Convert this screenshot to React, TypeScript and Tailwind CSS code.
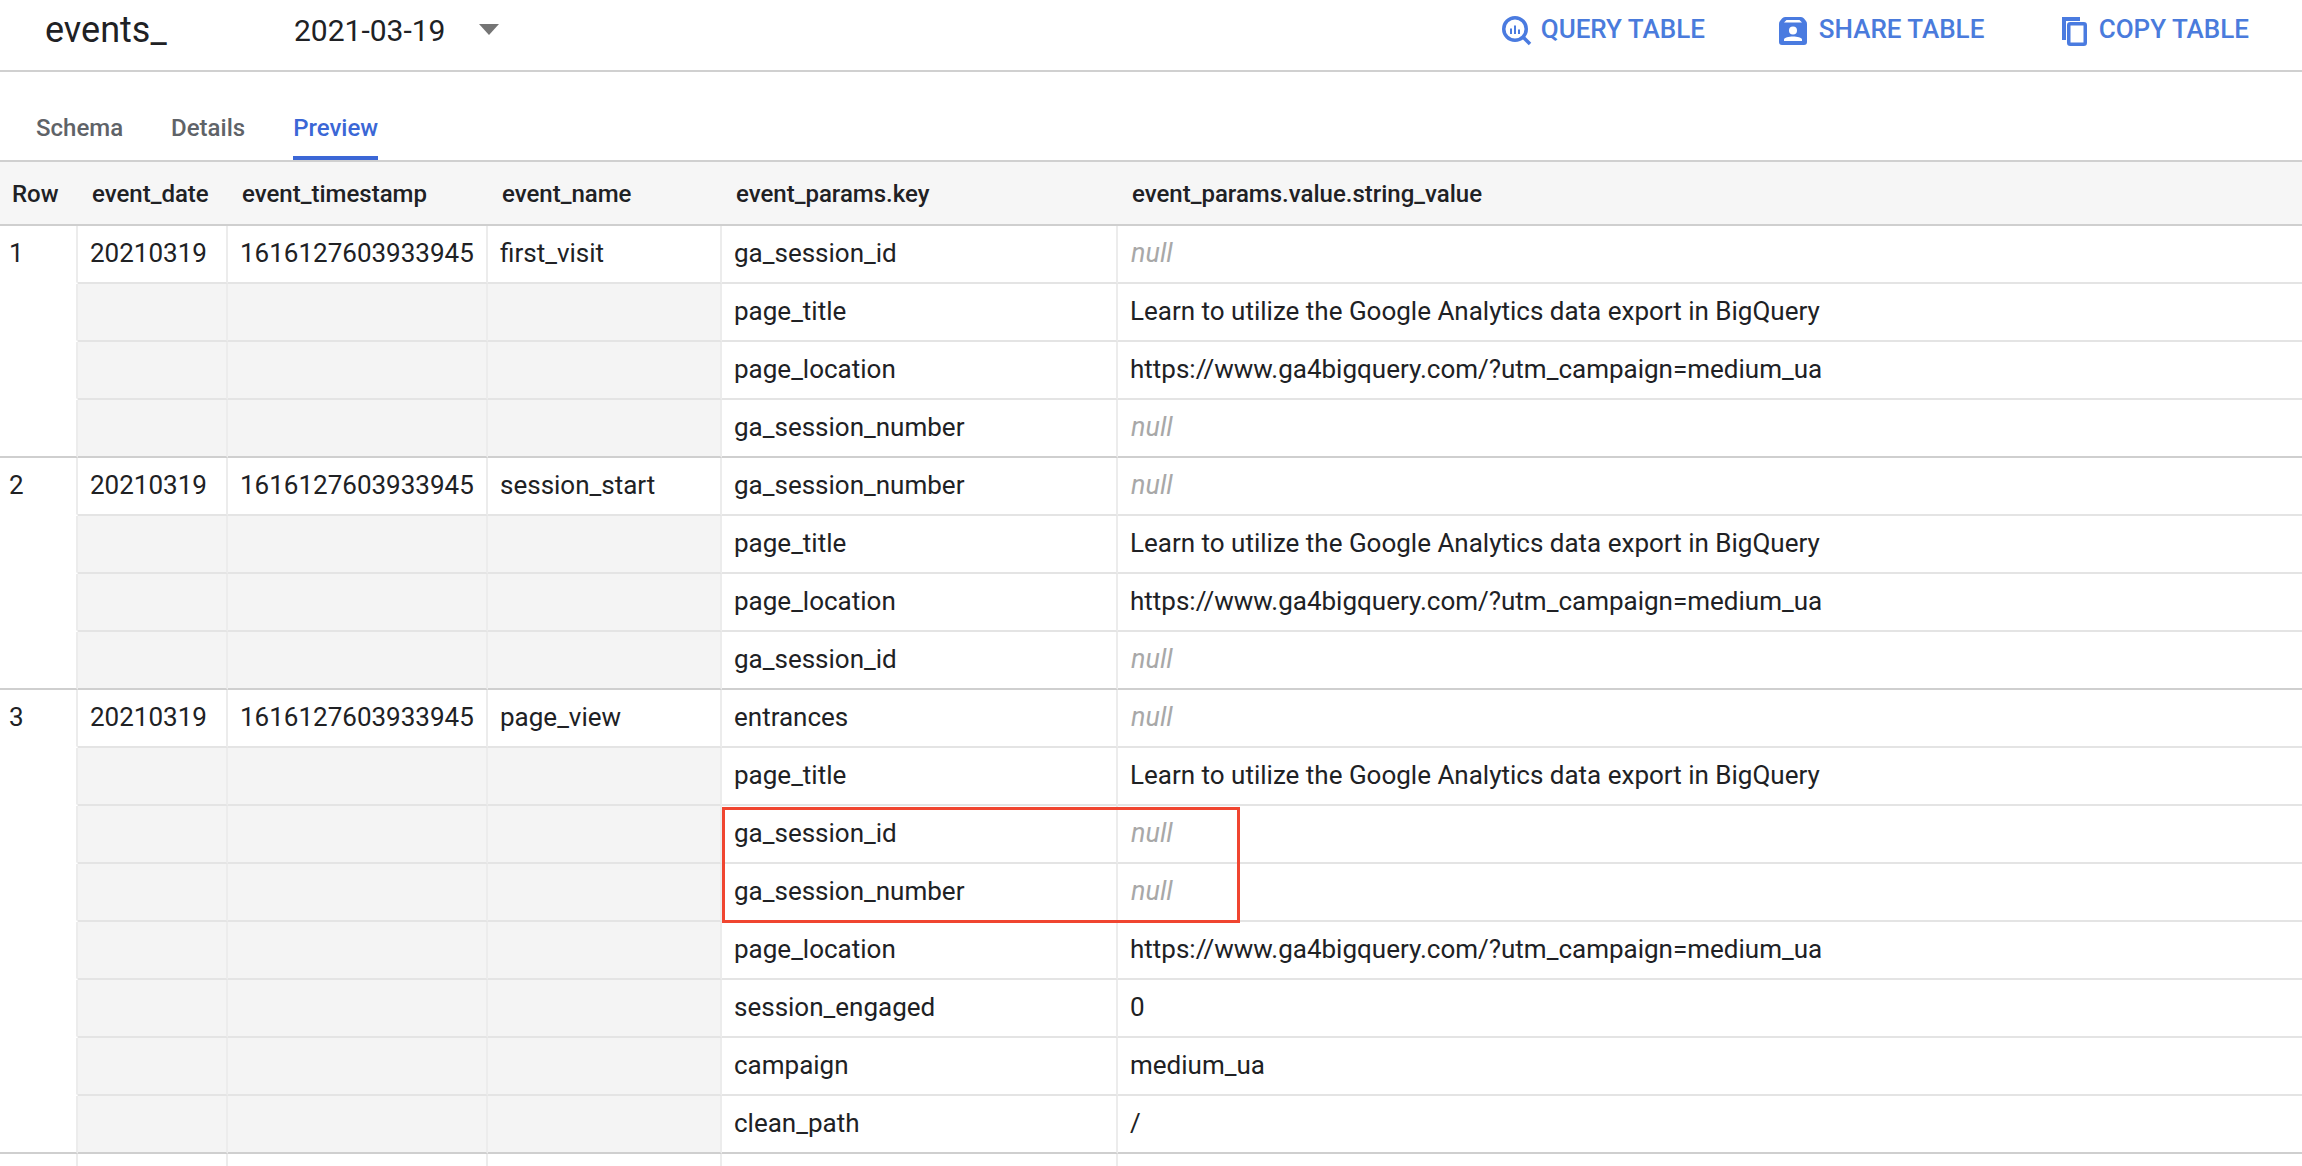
const rows: [string, string][][] = [
  [
    ["ga_session_id", "null"],
    ["page_title", "Learn to utilize the Google Analytics data export in BigQuery"],
    ["page_location", "https://www.ga4bigquery.com/?utm_campaign=medium_ua"],
    ["ga_session_number", "null"],
  ],
  [
    ["ga_session_number", "null"],
    ["page_title", "Learn to utilize the Google Analytics data export in BigQuery"],
    ["page_location", "https://www.ga4bigquery.com/?utm_campaign=medium_ua"],
    ["ga_session_id", "null"],
  ],
  [
    ["entrances", "null"],
    ["page_title", "Learn to utilize the Google Analytics data export in BigQuery"],
    ["ga_session_id", "null"],
    ["ga_session_number", "null"],
    ["page_location", "https://www.ga4bigquery.com/?utm_campaign=medium_ua"],
    ["session_engaged", "0"],
    ["campaign", "medium_ua"],
    ["clean_path", "/"],
  ],
];
const names = ["first_visit", "session_start", "page_view"];

function QueryIcon() {
  return (
    <svg width="30" height="30" viewBox="0 0 30 30" className="shrink-0">
      <circle cx="13" cy="13" r="11.25" fill="none" stroke="#4a7be0" strokeWidth="3.5" />
      <path d="M21.5 21.5l6.5 6.5" stroke="#4a7be0" strokeWidth="3.5" fill="none" />
      <path d="M9 12.5v5.5M13 9.5v8.5M17 13.5v4.5" stroke="#4a7be0" strokeWidth="2" fill="none" />
    </svg>
  );
}
function ShareIcon() {
  return (
    <svg width="28" height="28" viewBox="0 0 28 28" className="shrink-0">
      <path d="M6 0h16q2 0 3 1.5l2 2.5q1 1 1 3v18a3 3 0 0 1-3 3H3a3 3 0 0 1-3-3V7q0-2 1-3l2-2.5Q4 0 6 0z" fill="#4a7be0" />
      <path d="M5 5.5L7.5 3h13L23 5.5z" fill="#fff" />
      <circle cx="14" cy="13.5" r="4" fill="#fff" />
      <path d="M5 24v-1.5c0-2 5-3 9-3s9 1 9 3V24z" fill="#fff" />
    </svg>
  );
}
function CopyIcon() {
  return (
    <svg width="26" height="30" viewBox="0 0 26 30" className="shrink-0">
      <path d="M1 1h18v4H5v19H1z" fill="#4a7be0" />
      <rect x="7.75" y="7.75" width="16.5" height="20.5" rx="1.5" fill="none" stroke="#4a7be0" strokeWidth="3.5" />
    </svg>
  );
}

function Action({ icon, label, className }: { icon: React.ReactNode; label: string; className: string }) {
  return (
    <div className={"flex items-center " + className}>
      {icon}
      <span className="text-[26px] font-medium text-[#4a7bdc] whitespace-nowrap pb-[3px]">{label}</span>
    </div>
  );
}

function Cell({ children, gray, last, end }: { children?: React.ReactNode; gray?: boolean; last?: boolean; end?: boolean }) {
  return (
    <div
      className={
        "h-[58px] pl-3 pb-[2px] flex items-center whitespace-nowrap text-[26px] text-[#202124] border-b-2 " +
        (last ? "border-b-[#cfcfcf] " : "border-b-[#e4e4e4] ") +
        (end ? "" : "border-r-2 border-r-[#ececec] ") +
        (gray ? "bg-[#f4f4f4]" : "bg-white")
      }
    >
      {children}
    </div>
  );
}

export default function App() {
  return (
    <div className="relative w-[2302px] h-[1166px] overflow-hidden bg-white font-['Roboto',sans-serif] text-[#202124]">
      <div className="h-[72px] border-b-2 border-[#d0d0d0] flex items-center pr-[53px] pb-2">
        <span className="ml-[45px] w-[249px] text-[36px] pb-[2px]">events_</span>
        <span className="text-[30px] w-[185px] pb-[2px]">2021-03-19</span>
        <svg width="20" height="11" viewBox="0 0 20 11" className="mb-1">
          <path d="M0 0h20L10 11z" fill="#757575" />
        </svg>
        <div className="ml-auto flex">
          <Action icon={<QueryIcon />} label="QUERY TABLE" className="gap-[9px] w-[277px]" />
          <Action icon={<ShareIcon />} label="SHARE TABLE" className="gap-[12px] w-[282px]" />
          <Action icon={<CopyIcon />} label="COPY TABLE" className="gap-[12px]" />
        </div>
      </div>
      <div className="h-[90px] border-b-2 border-[#d0d0d0] flex items-end pl-9 gap-12 text-[24px] font-medium">
        <div className="h-[62px] pt-3 text-[#5f6368]">Schema</div>
        <div className="h-[62px] pt-3 text-[#5f6368]">Details</div>
        <div className="h-[62px] pt-3 text-[#3b67d6] border-b-[4px] border-[#3b67d6]">Preview</div>
      </div>
      <div className="grid grid-cols-[78px_150px_260px_234px_396px_1fr]">
        {["Row", "event_date", "event_timestamp", "event_name", "event_params.key", "event_params.value.string_value"].map((h, i) => (
          <div
            key={h}
            className={
              "h-[64px] pt-[2px] flex items-center bg-[#f6f6f6] border-b-2 border-[#cfcfcf] text-[24px] font-medium whitespace-nowrap " +
              (i === 0 ? "pl-3" : "pl-[14px]")
            }
          >
            {h}
          </div>
        ))}
        {rows.map((sec, s) =>
          sec.map((r, i) => {
            const last = i === sec.length - 1;
            const gray = i > 0;
            return [
              <div
                key={s + "-" + i + "-n"}
                className={
                  "h-[58px] pl-[9px] pb-[2px] flex items-center text-[26px] bg-white border-r-2 border-r-[#ececec] border-b-2 " +
                  (last ? "border-b-[#cfcfcf]" : "border-b-white")
                }
              >
                {i === 0 ? s + 1 : ""}
              </div>,
              <Cell key={s + "-" + i + "-d"} gray={gray} last={last}>{i === 0 ? "20210319" : ""}</Cell>,
              <Cell key={s + "-" + i + "-t"} gray={gray} last={last}>{i === 0 ? "1616127603933945" : ""}</Cell>,
              <Cell key={s + "-" + i + "-e"} gray={gray} last={last}>{i === 0 ? names[s] : ""}</Cell>,
              <Cell key={s + "-" + i + "-k"} last={last}>{r[0]}</Cell>,
              <Cell key={s + "-" + i + "-v"} last={last} end>
                {r[1] === "null" ? <span className="italic text-[#a8a8a8] text-[27px] ml-[1px]">null</span> : r[1]}
              </Cell>,
            ];
          })
        )}
        <div className="h-3 border-r-2 border-[#ececec]" />
        <div className="h-3 border-r-2 border-[#ececec]" />
        <div className="h-3 border-r-2 border-[#ececec]" />
        <div className="h-3 border-r-2 border-[#ececec]" />
        <div className="h-3 border-r-2 border-[#ececec]" />
      </div>
      <div className="absolute left-[722px] top-[807px] w-[518px] h-[116px] border-[3px] border-[#f04530]" />
    </div>
  );
}
